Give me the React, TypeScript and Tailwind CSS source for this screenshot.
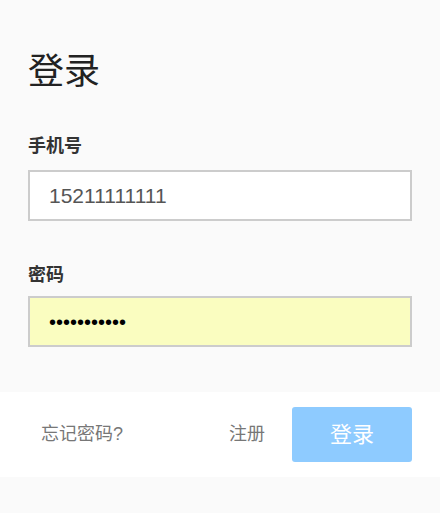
import React from "react";

export default function App() {
  const font = { fontFamily: '"Liberation Sans", Arial, "Noto Sans CJK SC", sans-serif' };
  return (
    <div className="w-[440px] h-[513px] bg-[#fafafa] text-[#333]" style={font}>
      <div className="px-[28px] pt-[50px]">
        <h1 className="text-[36px] leading-[44px] font-normal text-[#222]">登录</h1>
        <div className="mt-[40px] text-[18px] leading-[24px] font-bold text-[#333]">手机号</div>
        <div className="mt-[12px] h-[51px] border-2 border-[#cccccc] bg-white flex items-center pl-[19px] text-[21px] text-[#555]">
          15211111111
        </div>
        <div className="mt-[42px] text-[18px] leading-[24px] font-bold text-[#333]">密码</div>
        <div className="mt-[9px] h-[51px] border-2 border-[#cccccc] bg-[#fafdc0] flex items-center pl-[19px] text-[20px] text-black">
          •••••••••••
        </div>
      </div>
      <div className="mt-[45px] h-[85px] bg-white flex items-center pl-[41px] pr-[28px]">
        <span className="text-[18px] text-[#777]">忘记密码?</span>
        <span className="ml-auto mr-[27px] text-[18px] text-[#777]">注册</span>
        <button className="w-[120px] h-[55px] rounded-[3px] bg-[#8ecbff] text-white text-[22px]">登录</button>
      </div>
    </div>
  );
}
